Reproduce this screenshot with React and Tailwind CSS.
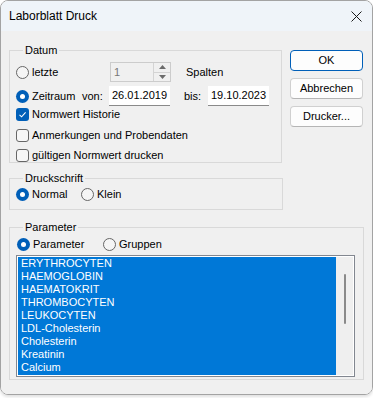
const PARAMS = [
  'ERYTHROCYTEN',
  'HAEMOGLOBIN',
  'HAEMATOKRIT',
  'THROMBOCYTEN',
  'LEUKOCYTEN',
  'LDL-Cholesterin',
  'Cholesterin',
  'Kreatinin',
  'Calcium',
];

function Radio({ checked }) {
  if (checked) {
    return (
      <span className="flex h-[13px] w-[13px] shrink-0 items-center justify-center rounded-full bg-[#005fb8]">
        <span className="h-[5px] w-[5px] rounded-full bg-white" />
      </span>
    );
  }
  return <span className="h-[13px] w-[13px] shrink-0 rounded-full border border-[#666] bg-[#f5f5f5]" />;
}

function Check({ checked }) {
  if (checked) {
    return (
      <span className="flex h-[13px] w-[13px] shrink-0 items-center justify-center rounded-[3px] bg-[#005fb8]">
        <svg width="9" height="9" viewBox="0 0 9 9" fill="none">
          <path d="M1.5 4.8 L3.6 6.8 L7.6 2.4" stroke="white" strokeWidth="1.1" />
        </svg>
      </span>
    );
  }
  return <span className="h-[13px] w-[13px] shrink-0 rounded-[3px] border border-[#666] bg-[#f7f7f7]" />;
}

function Group({ label, className, children }) {
  return (
    <fieldset className={`border border-[#d9d9d9] pl-[6px] ${className}`}>
      <legend className="ml-[7px] px-[2px] text-[11px] leading-[13px]">{label}</legend>
      {children}
    </fieldset>
  );
}

function Button({ children, primary }) {
  return (
    <button
      className={`h-[21px] w-[73px] rounded-[4px] bg-[#fdfdfd] text-[11px] leading-[13px] text-black ${
        primary ? 'border border-[#005fb8]' : 'border border-[#d0d0d0] border-b-[#b5b5b5]'
      }`}
    >
      {children}
    </button>
  );
}

function DateBox({ value }) {
  return (
    <div className="flex h-[20px] w-[61px] items-center border-b border-[#8a8a8a] bg-white pl-[3px] text-[11px]">
      {value}
    </div>
  );
}

export default function App() {
  return (
    <div className="h-[398px] w-[373px] bg-white font-['Liberation_Sans',Arial,sans-serif] text-black">
      <div className="flex h-[395px] w-[373px] flex-col overflow-hidden rounded-[8px] border border-[#a3a3a3] shadow-[0_2px_3px_rgba(0,0,0,0.12)]">
        <div className="flex h-[30px] shrink-0 items-center justify-between bg-[#eff4f9] pl-[8px] pr-[10px]">
          <span className="text-[12px]">Laborblatt Druck</span>
          <svg width="11" height="11" viewBox="0 0 11 11" fill="none">
            <path d="M0.5 0.5 L10.5 10.5 M10.5 0.5 L0.5 10.5" stroke="#1a1a1a" strokeWidth="1" />
          </svg>
        </div>

        <div className="flex flex-1 flex-col bg-[#f0f0f0] pl-[8px] pr-[9px] pt-[13px]">
          <div className="flex">
            <Group label="Datum" className="h-[119px] w-[274px] pr-[6px]">
              <div className="mt-[5px] flex h-[20px] items-center text-[11px] leading-[13px]">
                <div className="flex w-[94px] items-center gap-[3px]">
                  <Radio />
                  <span>letzte</span>
                </div>
                <div className="flex h-[20px] w-[61px] items-center border border-[#cccccc] bg-[#f0f0f0] pl-[3px] text-[#777]">
                  <span className="flex-1">1</span>
                  <div className="flex h-[18px] w-[17px] flex-col border-l border-[#d4d4d4]">
                    <div className="flex flex-1 items-center justify-center border-b border-[#d4d4d4]">
                      <svg width="7" height="4" viewBox="0 0 7 4"><path d="M0 4 L3.5 0 L7 4Z" fill="#6b6b6b" /></svg>
                    </div>
                    <div className="flex flex-1 items-center justify-center">
                      <svg width="7" height="4" viewBox="0 0 7 4"><path d="M0 0 L3.5 4 L7 0Z" fill="#6b6b6b" /></svg>
                    </div>
                  </div>
                </div>
                <span className="ml-[15px]">Spalten</span>
              </div>

              <div className="mt-[4px] flex h-[20px] items-center text-[11px] leading-[13px]">
                <div className="flex w-[66px] items-center gap-[3px]">
                  <Radio checked />
                  <span>Zeitraum</span>
                </div>
                <span className="w-[27px]">von:</span>
                <DateBox value="26.01.2019" />
                <span className="ml-[14px] w-[24px]">bis:</span>
                <DateBox value="19.10.2023" />
              </div>

              <div className="mt-[2px] flex h-[13px] items-center gap-[3px] text-[11px] leading-[13px]">
                <Check checked />
                <span>Normwert Historie</span>
              </div>
              <div className="mt-[8px] flex h-[13px] items-center gap-[3px] text-[11px] leading-[13px]">
                <Check />
                <span>Anmerkungen und Probendaten</span>
              </div>
              <div className="mt-[7px] flex h-[13px] items-center gap-[3px] text-[11px] leading-[13px]">
                <Check />
                <span>gültigen Normwert drucken</span>
              </div>
            </Group>

            <div className="ml-[8px] mt-[6px] flex flex-col gap-[7px]">
              <Button primary>OK</Button>
              <Button>Abbrechen</Button>
              <Button>Drucker...</Button>
            </div>
          </div>

          <Group label="Druckschrift" className="mt-[9px] h-[38px] w-[274px]">
            <div className="mt-[3px] flex h-[13px] items-center text-[11px] leading-[13px]">
              <div className="flex w-[65px] items-center gap-[3px]">
                <Radio checked />
                <span>Normal</span>
              </div>
              <div className="flex items-center gap-[3px]">
                <Radio />
                <span>Klein</span>
              </div>
            </div>
          </Group>

          <Group label="Parameter" className="mt-[11px] h-[159px] w-[355px] pl-[5px]">
            <div className="mt-[4px] flex h-[13px] items-center text-[11px] leading-[13px]">
              <div className="flex w-[87px] items-center gap-[3px] pl-[1px]">
                <Radio checked />
                <span>Parameter</span>
              </div>
              <div className="flex items-center gap-[3px]">
                <Radio />
                <span>Gruppen</span>
              </div>
            </div>

            <div className="mt-[4px] flex h-[122px] w-[339px] border border-[#828790] bg-white p-[1px]">
              <div className="flex-1 bg-[#0078d7] pl-[3px] text-[11px] leading-[13px] text-white">
                {PARAMS.map((p) => (
                  <div key={p} className="h-[13px]">
                    {p}
                  </div>
                ))}
              </div>
              <div className="flex w-[17px] justify-center bg-[#efefef] pt-[17px]">
                <div className="h-[50px] w-[2px] rounded-full bg-[#8a8a8a]" />
              </div>
            </div>
          </Group>
        </div>
      </div>
    </div>
  );
}
